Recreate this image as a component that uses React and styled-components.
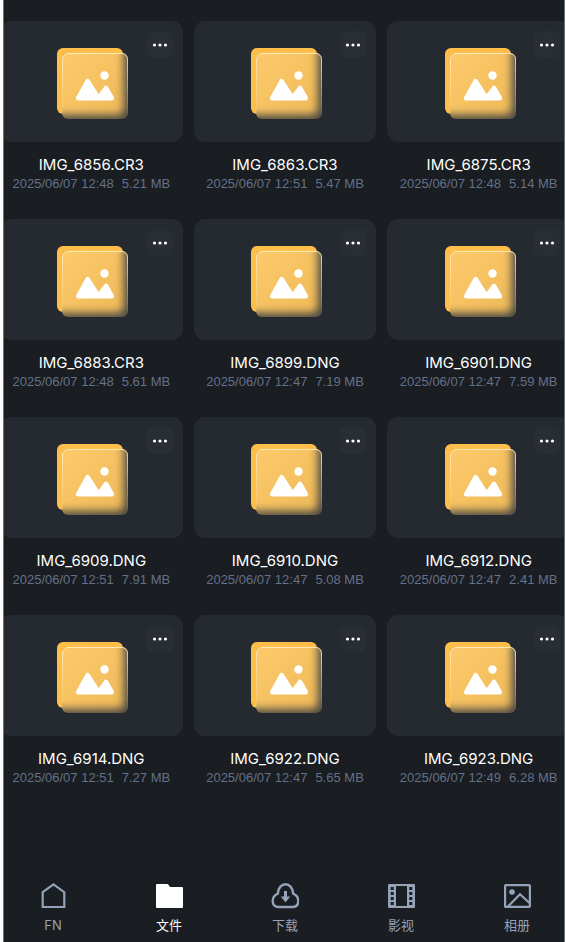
import styled, { createGlobalStyle } from "styled-components";

const files = [
  { name: "IMG_6856.CR3", date: "2025/06/07 12:48", size: "5.21 MB" },
  { name: "IMG_6863.CR3", date: "2025/06/07 12:51", size: "5.47 MB" },
  { name: "IMG_6875.CR3", date: "2025/06/07 12:48", size: "5.14 MB" },
  { name: "IMG_6883.CR3", date: "2025/06/07 12:48", size: "5.61 MB" },
  { name: "IMG_6899.DNG", date: "2025/06/07 12:47", size: "7.19 MB" },
  { name: "IMG_6901.DNG", date: "2025/06/07 12:47", size: "7.59 MB" },
  { name: "IMG_6909.DNG", date: "2025/06/07 12:51", size: "7.91 MB" },
  { name: "IMG_6910.DNG", date: "2025/06/07 12:47", size: "5.08 MB" },
  { name: "IMG_6912.DNG", date: "2025/06/07 12:47", size: "2.41 MB" },
  { name: "IMG_6914.DNG", date: "2025/06/07 12:51", size: "7.27 MB" },
  { name: "IMG_6922.DNG", date: "2025/06/07 12:47", size: "5.65 MB" },
  { name: "IMG_6923.DNG", date: "2025/06/07 12:49", size: "6.28 MB" },
];

/* shared by every photo icon */
const PhotoDefs = () => (
  <Defs aria-hidden="true">
    <defs>
      <linearGradient id="glass" gradientUnits="userSpaceOnUse" x1="6" y1="6" x2="66" y2="66">
        <stop offset="0" stopColor="#fdca6c" />
        <stop offset="1" stopColor="#efba58" />
      </linearGradient>
      <linearGradient id="rim" x1="0" y1="0" x2="0" y2="1">
        <stop offset="0" stopColor="#fff0c8" stopOpacity="0.85" />
        <stop offset="0.5" stopColor="#ffe9b8" stopOpacity="0.45" />
        <stop offset="1" stopColor="#ffe9b8" stopOpacity="0" />
      </linearGradient>
      <filter id="soften" x="-20%" y="-20%" width="140%" height="140%">
        <feGaussianBlur stdDeviation="4" />
      </filter>
      <clipPath id="frontPlate">
        <rect x="6" y="6" width="66" height="66" rx="6" />
      </clipPath>
    </defs>
  </Defs>
);

const PhotoIcon = () => (
  <svg width="74" height="74" viewBox="-2 -2 74 74" overflow="visible" aria-hidden="true">
    <rect x="1" y="1" width="66" height="66" rx="6" fill="#ffbd4a" />
    <rect x="6" y="6" width="66" height="66" rx="6" fill="#4a4843" />
    <g clipPath="url(#frontPlate)">
      <rect x="-14" y="-14" width="82" height="82" rx="6" fill="url(#glass)" filter="url(#soften)" />
    </g>
    <rect x="6.5" y="6.5" width="65" height="65" rx="5.5" fill="none" stroke="url(#rim)" />
    <circle cx="48.5" cy="28.5" r="4.2" fill="#fff" />
    <path
      d="M22.2 51.2 L31.7 34.2 L42.5 51.2 Z M42.5 51.2 L50 41 L55.8 51.2 Z"
      fill="#fff"
      stroke="#fff"
      strokeWidth="4.6"
      strokeLinejoin="round"
    />
  </svg>
);

const HomeIcon = () => (
  <svg width="28" height="28" viewBox="0 0 28 28" aria-hidden="true">
    <path d="M3.7 10.2 L14.5 2.3 L25.3 10.2 V25 H3.7 Z" fill="none" stroke="currentColor" strokeWidth="2.2" />
  </svg>
);

const FolderIcon = () => (
  <svg width="28" height="28" viewBox="0 0 28 28" aria-hidden="true">
    <path d="M2 2 H12 Q13 2 13.5 2.7 L15 5 H27 Q28 5 28 6 V25 Q28 26 27 26 H2 Q1 26 1 25 V3 Q1 2 2 2 Z" fill="currentColor" />
  </svg>
);

const DownloadIcon = () => (
  <svg width="28" height="28" viewBox="0 0 28 28" aria-hidden="true">
    <path
      d="M7.5 25 H21.5 C29 24.8 29.2 14.7 22.2 11.6 C21.4 -0.8 7.6 -0.8 6.8 11.6 C-0.2 14.7 0 24.8 7.5 25 Z"
      fill="none"
      stroke="currentColor"
      strokeWidth="2.4"
    />
    <path d="M13 9 H16 V14.4 H19.2 L14.5 20.5 L9.8 14.4 H13 Z" fill="currentColor" />
  </svg>
);

const FilmIcon = () => (
  <svg width="28" height="28" viewBox="0 0 28 28" aria-hidden="true">
    <path
      d="M2 2 H27 Q28 2 28 3 V25 Q28 26 27 26 H2 Q1 26 1 25 V3 Q1 2 2 2 Z M9 4 V24 H20 V4 Z M3.7 5 V8 H6.7 V5 Z M3.7 10 V13 H6.7 V10 Z M3.7 15 V18 H6.7 V15 Z M3.7 20 V23 H6.7 V20 Z M22.3 5 V8 H25.3 V5 Z M22.3 10 V13 H25.3 V10 Z M22.3 15 V18 H25.3 V15 Z M22.3 20 V23 H25.3 V20 Z"
      fill="currentColor"
      fillRule="evenodd"
    />
  </svg>
);

const AlbumIcon = () => (
  <svg width="28" height="28" viewBox="0 0 28 28" aria-hidden="true">
    <rect x="2.1" y="3.1" width="24.8" height="21.8" rx="0.6" fill="none" stroke="currentColor" strokeWidth="2.2" />
    <circle cx="9" cy="10" r="2.8" fill="currentColor" />
    <path d="M5 24.5 L17 12.2 L26.5 21" fill="none" stroke="currentColor" strokeWidth="2.2" />
  </svg>
);

const tabs = [
  { label: "FN", Icon: HomeIcon },
  { label: "文件", Icon: FolderIcon, active: true },
  { label: "下载", Icon: DownloadIcon },
  { label: "影视", Icon: FilmIcon },
  { label: "相册", Icon: AlbumIcon },
];

const FileCard = ({ file }) => (
  <StyledFileCard>
    <Thumb>
      <PhotoIcon />
      <MoreButton type="button" aria-label={file.name}>
        <svg width="16" height="4" viewBox="0 0 16 4" aria-hidden="true">
          <circle cx="2.5" cy="2" r="1.6" fill="#fff" />
          <circle cx="8" cy="2" r="1.6" fill="#fff" />
          <circle cx="13.5" cy="2" r="1.6" fill="#fff" />
        </svg>
      </MoreButton>
    </Thumb>
    <FileName>{file.name}</FileName>
    <FileMeta>
      <span>{file.date}</span>
      <span>{file.size}</span>
    </FileMeta>
  </StyledFileCard>
);

const App = () => (
  <>
    <GlobalStyle />
    <PhotoDefs />
    <Screen>
      <FileGrid>
        {files.map((file) => (
          <FileCard key={file.name} file={file} />
        ))}
      </FileGrid>
      <TabBar>
        {tabs.map(({ label, Icon, active }) => (
          <Tab key={label} type="button" $active={active}>
            <Icon />
            {label}
          </Tab>
        ))}
      </TabBar>
    </Screen>
  </>
);

const GlobalStyle = createGlobalStyle`
  * {
    box-sizing: border-box;
  }
  body {
    margin: 0;
    background: #fff;
    font-family: Inter, "Noto Sans CJK SC", sans-serif;
  }
  button {
    padding: 0;
    border: none;
    font-family: inherit;
  }
`;

const Defs = styled.svg`
  position: absolute;
  width: 0;
  height: 0;
`;

const Screen = styled.main`
  display: flex;
  flex-direction: column;
  min-height: 100vh;
  margin: 0 1px 0 3px;
  border: solid #6c7378;
  border-width: 0 1px;
  background: #1a1d21;
  overflow: hidden;
`;

/* the grid and the tab bar bleed past both edges of the screen */
const FileGrid = styled.ul`
  display: grid;
  grid-template-columns: repeat(3, 1fr);
  gap: 26px 11px;
  margin: 0 -6px 0 -4px;
  padding: 21px 0 0;
  list-style: none;
`;

const StyledFileCard = styled.li`
  display: flex;
  flex-direction: column;
  align-items: center;
  min-width: 0;
`;

const Thumb = styled.div`
  position: relative;
  display: flex;
  align-items: center;
  justify-content: center;
  width: 100%;
  height: 121px;
  border-radius: 11px;
  background: #252a30;
`;

const MoreButton = styled.button`
  position: absolute;
  top: 10px;
  right: 10px;
  display: flex;
  align-items: center;
  justify-content: center;
  width: 26px;
  height: 27px;
  border-radius: 6px;
  background: #292d34;
`;

const FileName = styled.div`
  margin-top: 13px;
  font-size: 15px;
  line-height: 20px;
  color: #fff;
  white-space: nowrap;
`;

const FileMeta = styled.div`
  display: flex;
  gap: 8px;
  font-family: "Liberation Sans", sans-serif;
  font-size: 13px;
  line-height: 18px;
  color: #64718a;
  white-space: nowrap;
`;

const TabBar = styled.nav`
  display: flex;
  margin: auto -11px 0 -9px;
  padding-bottom: 8px;
`;

const Tab = styled.button`
  display: flex;
  flex: 1;
  flex-direction: column;
  align-items: center;
  gap: 6px;
  background: transparent;
  color: ${({ $active }) => ($active ? "#fff" : "#94a3b8")};
  font-size: 13px;
  line-height: 18px;
`;

export default App;
